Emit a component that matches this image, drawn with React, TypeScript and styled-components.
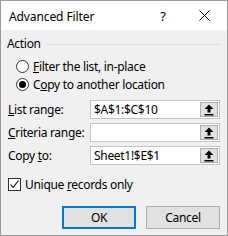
import styled, { createGlobalStyle } from "styled-components";

const Global = createGlobalStyle`
  html, body {
    margin: 0;
    padding: 0;
    background: #ffffff;
  }
  body {
    font-family: "Segoe UI", "Noto Sans", "Liberation Sans", sans-serif;
    font-size: 12px;
    letter-spacing: -0.3px;
    color: #000;
  }
`;

const UpArrow = () => (
  <svg width="10" height="12" viewBox="0 0 10 12">
    <path d="M5 0.5 L9.5 5 H6.5 V8.5 H3.5 V5 H0.5 Z" fill="#000" />
    <rect x="0.5" y="10" width="9" height="1.5" fill="#000" />
  </svg>
);

const RefEdit = ({ value }: { value: string }) => (
  <RefBox>
    <RefInput>{value}</RefInput>
    <RefButton>
      <UpArrow />
    </RefButton>
  </RefBox>
);

export default function App() {
  return (
    <>
      <Global />
      <Window>
        <TitleBar>
          <Title>Advanced Filter</Title>
          <TitleButtons>
            <Help>?</Help>
            <Close>
              <svg width="11" height="11" viewBox="0 0 11 11">
                <path d="M0.5 0.5 L10.5 10.5 M10.5 0.5 L0.5 10.5" stroke="#000" strokeWidth="1" />
              </svg>
            </Close>
          </TitleButtons>
        </TitleBar>
        <Body>
          <GroupHeader>
            <span>Action</span>
            <Rule />
          </GroupHeader>
          <RadioList>
            <RadioRow>
              <Radio />
              <span>
                <u>F</u>ilter the list, in-place
              </span>
            </RadioRow>
            <RadioRow>
              <Radio $checked />
              <span>
                C<u>o</u>py to another location
              </span>
            </RadioRow>
          </RadioList>
          <FieldGrid>
            <FieldLabel>
              <u>L</u>ist range:
            </FieldLabel>
            <RefEdit value="$A$1:$C$10" />
            <FieldLabel>
              <u>C</u>riteria range:
            </FieldLabel>
            <RefEdit value="" />
            <FieldLabel>
              Copy <u>t</u>o:
            </FieldLabel>
            <RefEdit value="Sheet1!$E$1" />
          </FieldGrid>
          <CheckRow>
            <CheckBox>
              <svg width="11" height="11" viewBox="0 0 11 11">
                <path d="M1.5 5.5 L4 8.5 L9.5 1.5" stroke="#000" strokeWidth="1.1" fill="none" />
              </svg>
            </CheckBox>
            <span>
              Unique <u>r</u>ecords only
            </span>
          </CheckRow>
          <ButtonRow>
            <DialogButton $primary>OK</DialogButton>
            <DialogButton>Cancel</DialogButton>
          </ButtonRow>
        </Body>
      </Window>
    </>
  );
}

const Window = styled.div`
  width: 228px;
  height: 236px;
  box-sizing: border-box;
  border: 1px solid #9a9a9a;
  background: #f0f0f0;
  display: flex;
  flex-direction: column;
`;

const TitleBar = styled.div`
  height: 29px;
  background: #ffffff;
  display: flex;
  align-items: center;
  justify-content: space-between;
  padding-left: 8px;
`;

const Title = styled.div`
  font-size: 12px;
  letter-spacing: -0.1px;
  padding-top: 1px;
`;

const TitleButtons = styled.div`
  display: flex;
  align-items: center;
  height: 100%;
`;

const Help = styled.div`
  width: 20px;
  text-align: center;
  font-size: 13px;
  margin-right: 26px;
`;

const Close = styled.div`
  width: 11px;
  height: 11px;
  margin-right: 17px;
  display: flex;
`;

const Body = styled.div`
  flex: 1;
  display: flex;
  flex-direction: column;
  padding: 6px 7px 0 6px;
`;

const GroupHeader = styled.div`
  display: flex;
  align-items: center;
  gap: 6px;
  height: 15px;
  line-height: 15px;
`;

const Rule = styled.div`
  flex: 1;
  height: 1px;
  background: #dcdcdc;
  margin-top: 1px;
`;

const RadioList = styled.div`
  display: flex;
  flex-direction: column;
  gap: 5px;
  padding: 9px 0 0 9px;
`;

const RadioRow = styled.div`
  display: flex;
  align-items: center;
  gap: 4px;
  height: 13px;
  line-height: 13px;
`;

const Radio = styled.div<{ $checked?: boolean }>`
  width: 13px;
  height: 13px;
  box-sizing: border-box;
  border: 1px solid #333333;
  border-radius: 50%;
  background: #ffffff;
  display: flex;
  align-items: center;
  justify-content: center;

  &::after {
    content: "";
    width: 7px;
    height: 7px;
    border-radius: 50%;
    background: ${({ $checked }) => ($checked ? "#000" : "transparent")};
  }
`;

const FieldGrid = styled.div`
  display: grid;
  grid-template-columns: 82px 1fr;
  row-gap: 4px;
  align-items: center;
  margin-top: 9px;
  padding-left: 1px;
`;

const FieldLabel = styled.div`
  line-height: 19px;
`;

const RefBox = styled.div`
  display: flex;
  height: 19px;
  box-sizing: border-box;
  background: #ffffff;
  border: 1px solid #c4c4c4;
  padding: 1px;
`;

const RefInput = styled.div`
  flex: 1;
  padding-left: 2px;
  line-height: 15px;
`;

const RefButton = styled.div`
  width: 18px;
  box-sizing: border-box;
  background: #e1e1e1;
  border: 1px solid #adadad;
  display: flex;
  align-items: center;
  justify-content: center;
`;

const CheckRow = styled.div`
  display: flex;
  align-items: center;
  gap: 4px;
  margin-top: 13px;
  padding-left: 1px;
  height: 13px;
`;

const CheckBox = styled.div`
  width: 13px;
  height: 13px;
  box-sizing: border-box;
  border: 1px solid #333333;
  background: #ffffff;
  display: flex;
  align-items: center;
  justify-content: center;
`;

const ButtonRow = styled.div`
  display: flex;
  justify-content: flex-end;
  gap: 10px;
  margin-top: 15px;
`;

const DialogButton = styled.div<{ $primary?: boolean }>`
  width: 74px;
  height: 23px;
  box-sizing: border-box;
  background: #e1e1e1;
  border: ${({ $primary }) => ($primary ? "2px solid #0078d7" : "1px solid #adadad")};
  display: flex;
  align-items: center;
  justify-content: center;
`;
